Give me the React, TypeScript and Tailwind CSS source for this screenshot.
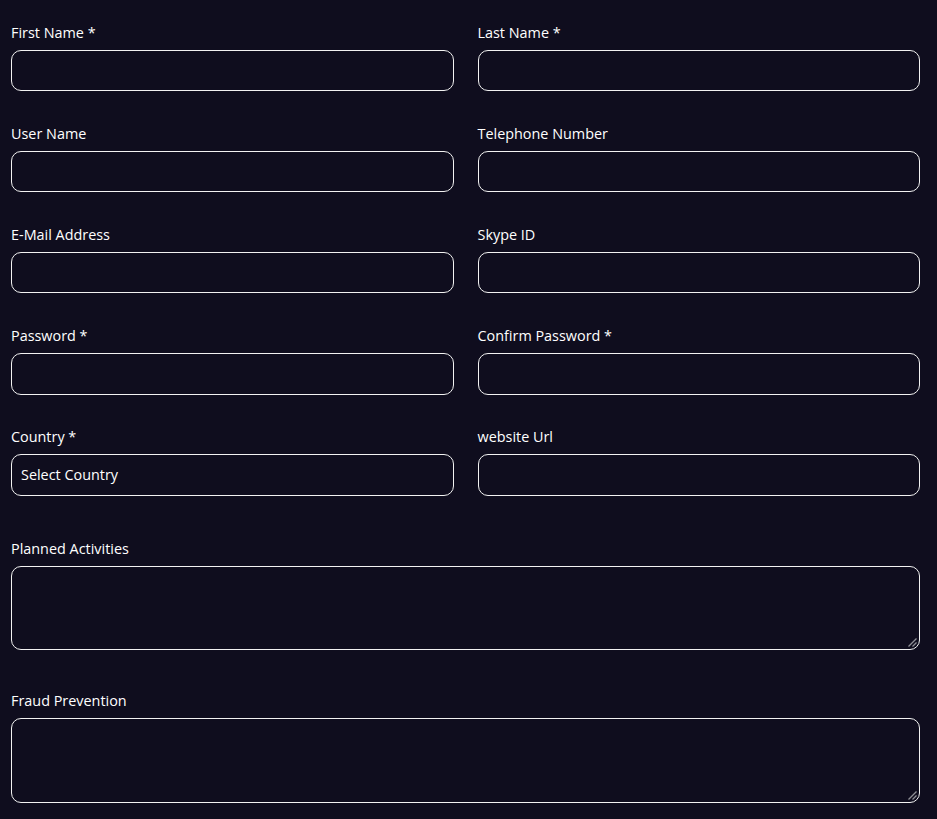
import React from "react";

const inputCls =
  "block w-full h-[41.3px] rounded-[10px] border border-[#f2f2f2] bg-transparent px-[9px] text-[14.4px] text-white outline-none";

const labelCls = "text-[14.4px] leading-[21px] text-white";

function Field({ label }: { label: string }) {
  return (
    <div className="flex flex-col">
      <label className={labelCls}>{label}</label>
      <input className={inputCls + " mt-[7px]"} />
    </div>
  );
}

function Area({ label, h }: { label: string; h: string }) {
  return (
    <div className="flex flex-col">
      <label className={labelCls}>{label}</label>
      <div className="relative mt-[7px]">
        <textarea
          className={
            "block w-full resize-none rounded-[10px] border border-[#f2f2f2] bg-transparent px-[9px] py-2 text-[14.4px] text-white outline-none " +
            h
          }
        />
        <svg
          className="pointer-events-none absolute bottom-[2px] right-[2px]"
          width="11"
          height="11"
          viewBox="0 0 11 11"
        >
          <line x1="1.5" y1="9.5" x2="9.5" y2="1.5" stroke="#8f8f96" strokeWidth="1.3" />
          <line x1="5.5" y1="9.5" x2="9.5" y2="5.5" stroke="#8f8f96" strokeWidth="1.3" />
        </svg>
      </div>
    </div>
  );
}

export default function App() {
  const rows: [string, string][] = [
    ["First Name *", "Last Name *"],
    ["User Name", "Telephone Number"],
    ["E-Mail Address", "Skype ID"],
    ["Password *", "Confirm Password *"],
  ];
  return (
    <div
      className="min-h-[819px] w-[937px] bg-[#0f0d1e] pl-[11px] pr-[17px] pt-[22px]"
      style={{ fontFamily: '"Open Sans", "Noto Sans", sans-serif' }}
    >
      <div className="grid grid-cols-2 gap-x-[24px] gap-y-[31.8px]">
        {rows.map(([a, b]) => (
          <React.Fragment key={a}>
            <Field label={a} />
            <Field label={b} />
          </React.Fragment>
        ))}
        <div className="flex flex-col">
          <label className={labelCls}>Country *</label>
          <select className={inputCls + " mt-[7px] appearance-none"}>
            <option className="bg-[#0f0d1e]">Select Country</option>
          </select>
        </div>
        <Field label="website Url" />
      </div>
      <div className="mt-[42.5px]">
        <Area label="Planned Activities" h="h-[84px]" />
      </div>
      <div className="mt-[40px]">
        <Area label="Fraud Prevention" h="h-[85px]" />
      </div>
    </div>
  );
}
